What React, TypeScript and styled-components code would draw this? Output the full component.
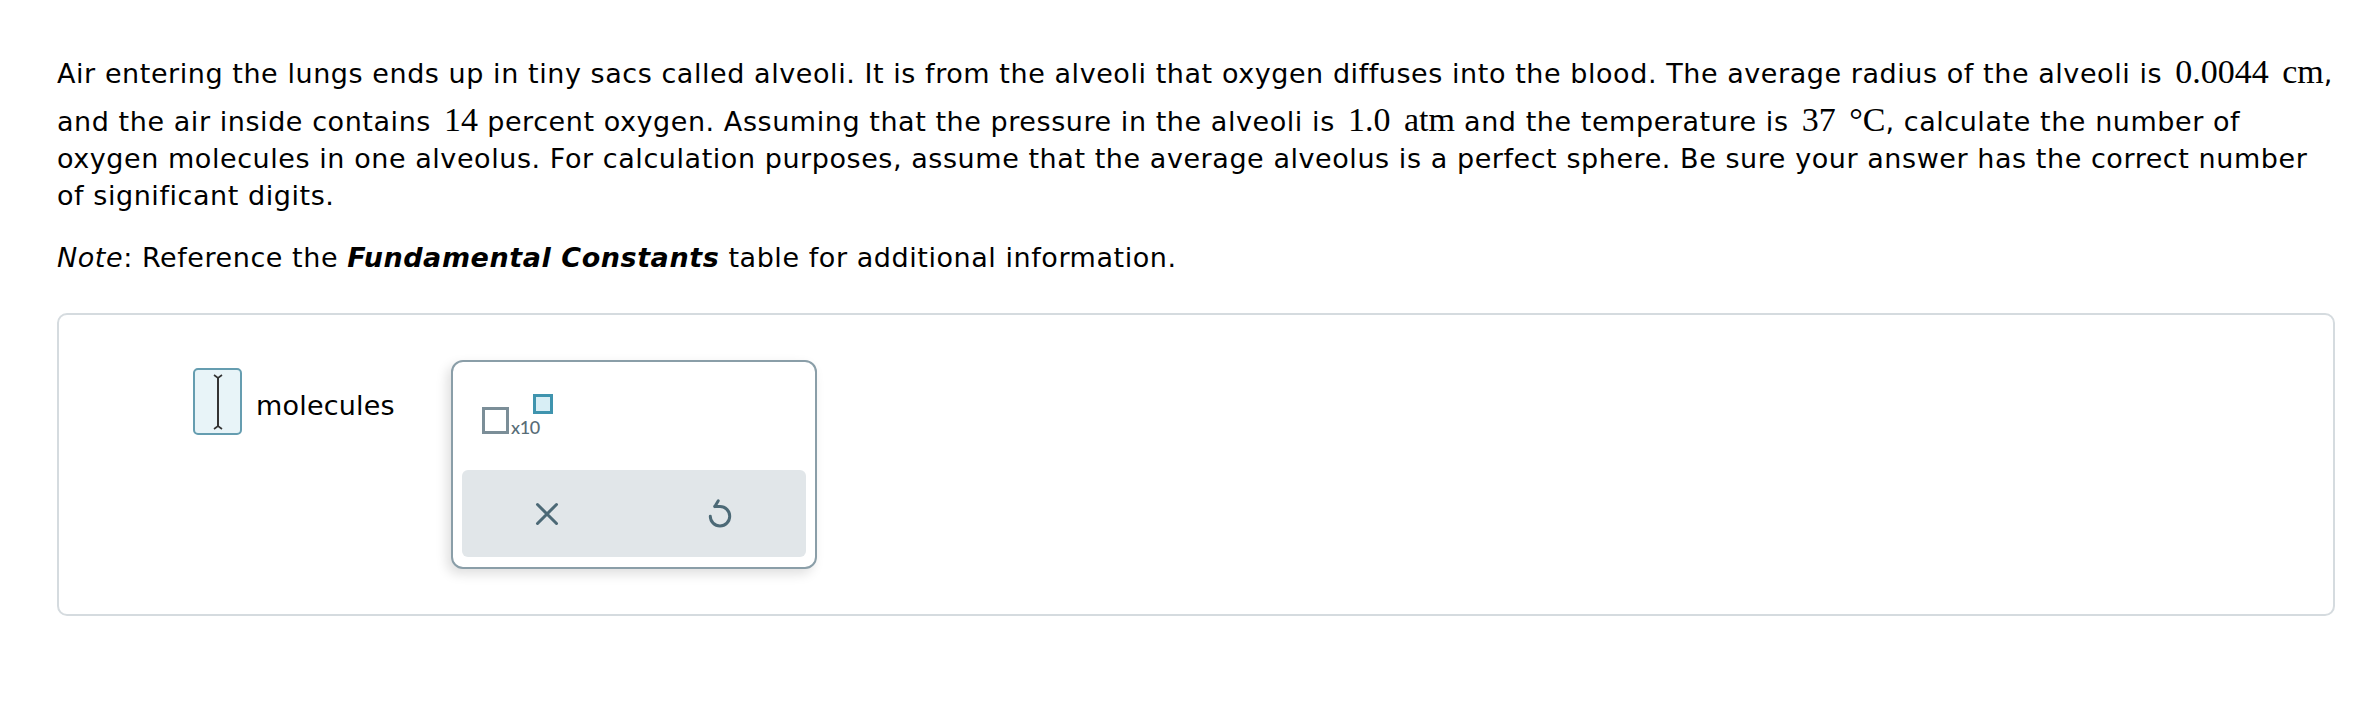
import React from 'react';
import styled, { createGlobalStyle } from 'styled-components';

const GlobalStyle = createGlobalStyle`
  body {
    margin: 0;
    background: #fff;
    font-family: "DejaVu Sans", Verdana, sans-serif;
    color: #000;
  }
`;

const Page = styled.div`
  padding: 44px 25px 0 57px;
`;

const Question = styled.p`
  margin: 0;
  font-size: 27px;
  line-height: 37px;
  letter-spacing: 0.56px;
`;

const NoteLine = styled.p`
  margin: 25px 0 0;
  font-size: 27px;
  line-height: 37px;
  letter-spacing: 0.56px;
`;

// inline maths, set in a serif like the MathJax output
const Math = styled.span`
  display: inline-block;
  padding-top: 11px;
  margin-left: 4px;
  font-family: "Liberation Serif", "Times New Roman", serif;
  font-size: 34px;
  line-height: 33px;
  letter-spacing: 0;
  word-spacing: 5px;
`;

const AnswerBox = styled.div`
  position: relative;
  margin-top: 37px;
  height: 303px;
  border: 2px solid #d5dbdf;
  border-radius: 10px;
  padding: 53px 0 0 134px;
  box-sizing: border-box;
`;

const AnswerRow = styled.div`
  display: flex;
  align-items: flex-start;
  gap: 14px;
`;

const InputBox = styled.div`
  width: 49px;
  height: 67px;
  box-sizing: border-box;
  border: 2px solid #659db0;
  border-radius: 5px;
  background: #e8f4f8;
  display: flex;
  align-items: center;
  justify-content: center;
`;

const Unit = styled.span`
  font-size: 27px;
  line-height: 1;
  letter-spacing: 0.2px;
  margin-top: 24px;
`;

const Palette = styled.div`
  position: absolute;
  left: 392px;
  top: 45px;
  width: 366px;
  height: 209px;
  box-sizing: border-box;
  border: 2px solid #8a9ea8;
  border-radius: 12px;
  background: #fff;
  box-shadow: -4px 5px 12px rgba(0, 0, 0, 0.13);
  display: flex;
  flex-direction: column;
  justify-content: space-between;
  padding: 32px 9px 10px;
`;

const Sci = styled.div`
  display: flex;
  align-items: flex-start;
  padding-left: 20px;
  height: 41px;
`;

const Slot = styled.div<{ $size: number; $active?: boolean }>`
  width: ${p => p.$size}px;
  height: ${p => p.$size}px;
  box-sizing: border-box;
  border: 3px solid ${p => (p.$active ? '#3f94ae' : '#7b8e98')};
  background: ${p => (p.$active ? '#d8eef5' : '#fff')};
`;

const Exponent = styled(Slot)`
  margin-left: -7px;
`;

const Base = styled.div`
  display: flex;
  align-items: flex-end;
  margin-top: 13px;
`;

const Times = styled.span`
  font-family: "Lato", "Open Sans", sans-serif;
  font-size: 18px;
  font-weight: 500;
  line-height: 1;
  color: #586d77;
  margin-left: 2px;
  margin-bottom: -2px;
  letter-spacing: -0.4px;
`;

const ToolBar = styled.div`
  height: 87px;
  border-radius: 6px;
  background: #e1e6e9;
  display: flex;
  align-items: center;
  gap: 133px;
  padding-left: 65px;
`;

const ToolButton = styled.button`
  border: none;
  background: none;
  padding: 0;
  width: 40px;
  height: 40px;
  display: flex;
  align-items: center;
  justify-content: center;
  color: #4c6976;
`;

const Cursor = () => (
  <svg width="14" height="58" viewBox="0 0 14 58" fill="none" stroke="#333" strokeWidth="1.6">
    <path d="M3 2 L7 5 L11 2" />
    <path d="M7 5 V53" strokeWidth="2" />
    <path d="M3 56 L7 53 L11 56" />
  </svg>
);

const CloseIcon = () => (
  <svg width="24" height="24" viewBox="0 0 24 24" fill="none" stroke="currentColor" strokeWidth="3" strokeLinecap="round">
    <path d="M2.5 2.5 L21.5 21.5 M21.5 2.5 L2.5 21.5" />
  </svg>
);

const UndoIcon = () => (
  <svg width="28" height="32" viewBox="0 0 24 28" fill="none" stroke="currentColor" strokeWidth="2.6" strokeLinecap="round" strokeLinejoin="round">
    <path d="M3.5 16 A8.5 8.5 0 1 0 12 7.5 H7.5" />
    <path d="M10.5 2.5 L7.5 7.5" />
  </svg>
);

export default function App() {
  return (
    <Page>
      <GlobalStyle />
      <Question>
        Air entering the lungs ends up in tiny sacs called alveoli. It is from the alveoli that oxygen diffuses into
        the blood. The average radius of the alveoli is <Math>0.0044 cm</Math>, and the air inside contains{' '}
        <Math>14</Math> percent oxygen. Assuming that the pressure in the alveoli is <Math>1.0 atm</Math> and the
        temperature is <Math>37 °C</Math>, calculate the number of oxygen molecules in one alveolus. For
        calculation purposes, assume that the average alveolus is a perfect sphere. Be sure your answer has the
        correct number of significant digits.
      </Question>
      <NoteLine>
        <i>Note</i>: Reference the <b><i>Fundamental Constants</i></b> table for additional information.
      </NoteLine>
      <AnswerBox>
        <AnswerRow>
          <InputBox>
            <Cursor />
          </InputBox>
          <Unit>molecules</Unit>
        </AnswerRow>
        <Palette>
          <Sci>
            <Base>
              <Slot $size={27} />
              <Times>x10</Times>
            </Base>
            <Exponent $size={20} $active />
          </Sci>
          <ToolBar>
            <ToolButton aria-label="clear">
              <CloseIcon />
            </ToolButton>
            <ToolButton aria-label="undo">
              <UndoIcon />
            </ToolButton>
          </ToolBar>
        </Palette>
      </AnswerBox>
    </Page>
  );
}
